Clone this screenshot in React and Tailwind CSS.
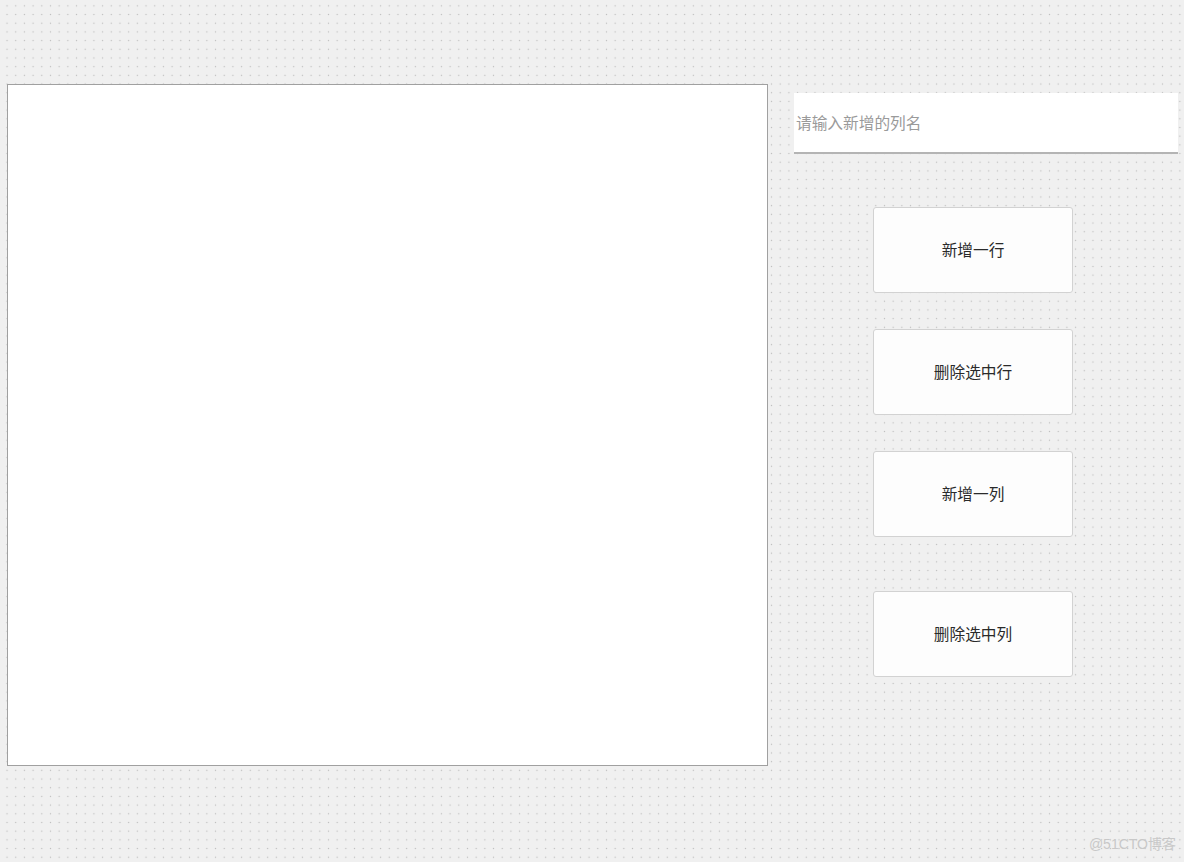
export default function App() {
  const font = { fontFamily: '"Liberation Sans", "Noto Sans CJK SC", sans-serif' };
  const btn =
    "w-[200px] h-[86px] ml-[79px] pt-[2px] flex items-center justify-center rounded-[3px] border border-[#d2d2d2] bg-[#fdfdfd] text-[15.7px] text-[#2a2a2a]";
  return (
    <div
      className="relative w-full h-[862px] overflow-hidden bg-[#f0f0f0] bg-[radial-gradient(circle,#bdbdbd_0.7px,transparent_1px)] bg-[size:8.7px_8.7px] bg-[position:2.7px_1.5px]"
      style={font}
    >
      <div className="flex">
        <div className="mt-[84px] ml-[7px] w-[761px] h-[682px] bg-white border border-[#a0a0a0]" />
        <div className="ml-[26px] flex flex-col">
          <div className="mt-[93px] w-[384px] h-[61px] bg-white border-b-2 border-[#b4b4b4] flex items-center pl-[2px] pt-[3px]">
            <span className="text-[15.7px] text-[#9a9a9a]">请输入新增的列名</span>
          </div>
          <div className={`${btn} mt-[53px]`}>新增一行</div>
          <div className={`${btn} mt-[36px]`}>删除选中行</div>
          <div className={`${btn} mt-[36px]`}>新增一列</div>
          <div className={`${btn} mt-[54px]`}>删除选中列</div>
        </div>
      </div>
      <div className="absolute right-[8px] bottom-[7px] text-[14px] text-[#c8c8c8]">@51CTO博客</div>
    </div>
  );
}
